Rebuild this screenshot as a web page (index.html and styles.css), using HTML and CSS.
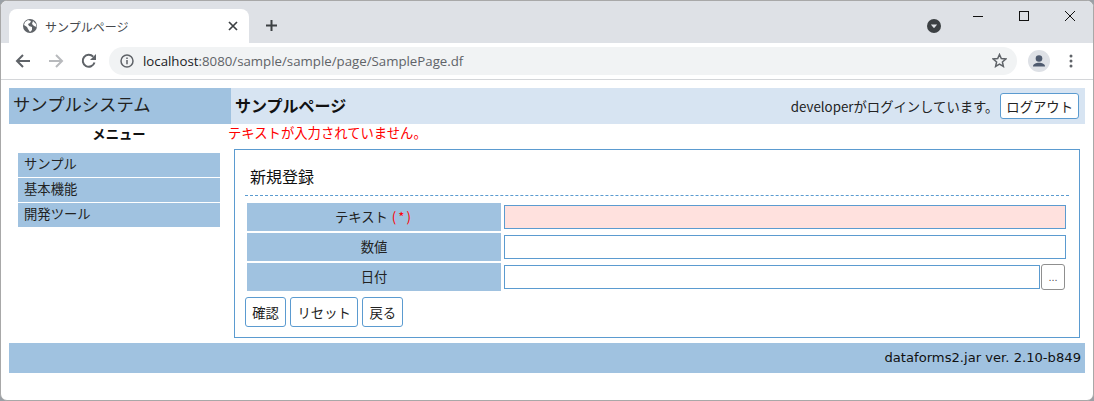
FILE: index.html
```html
<!DOCTYPE html>
<html lang="ja">
<head>
    <meta charset="UTF-8">
    <title>サンプルページ</title>
    <link rel="stylesheet" href="styles.css">
</head>
<body>
<div class="window">
    <div class="tabstrip">
        <div class="tab">
            <svg class="favicon" width="16" height="16" viewBox="0 0 16 16"><circle cx="8" cy="8" r="7" fill="#5f6368"/><path d="M3 4l3-2 3 1-1 2-2 1 1 2 3 1v3l-2 2-2-3-1-2-3-2zM11 3l3 3 .5 3-2.500-1-2-2z" fill="#fff"/></svg>
            <span class="tab-title">サンプルページ</span>
            <svg class="tab-close" width="10" height="10" viewBox="0 0 10 10"><path d="M1 1l8 8M9 1l-8 8" stroke="#3c4043" stroke-width="1.700"/></svg>
        </div>
        <svg class="new-tab" width="13" height="13" viewBox="0 0 13 13"><path d="M6.500 1v11M1 6.500h11" stroke="#3c4043" stroke-width="2"/></svg>
        <div class="strip-right">
            <svg class="tab-search" width="14" height="14" viewBox="0 0 14 14"><circle cx="7" cy="7" r="7" fill="#3c4043"/><path d="M3.800 5.500h6.400L7 9.300z" fill="#dee1e6"/></svg>
            <div class="win-buttons">
                <svg width="46" height="30" viewBox="0 0 46 30"><path d="M18 15.500h10" stroke="#111"/></svg>
                <svg width="46" height="30" viewBox="0 0 46 30"><rect x="18.500" y="10.500" width="9" height="9" fill="none" stroke="#111"/></svg>
                <svg width="46" height="30" viewBox="0 0 46 30"><path d="M18 10l10 10M28 10l-10 10" stroke="#111"/></svg>
            </div>
        </div>
    </div>
    <div class="toolbar">
        <svg class="nav" width="16" height="16" viewBox="0 0 16 16"><path d="M15 8H2M8 2L2 8l6 6" fill="none" stroke="#5f6368" stroke-width="2"/></svg>
        <svg class="nav" width="16" height="16" viewBox="0 0 16 16"><path d="M1 8h13M8 2l6 6-6 6" fill="none" stroke="#b8babd" stroke-width="2"/></svg>
        <svg class="nav" width="16" height="16" viewBox="0 0 16 16"><path d="M13.500 9.500A6 6 0 1 1 12.200 3.700" fill="none" stroke="#5f6368" stroke-width="2"/><path d="M15 1v6H9z" fill="#5f6368"/></svg>
        <div class="omnibox">
            <svg width="14" height="14" viewBox="0 0 14 14"><circle cx="7" cy="7" r="6" fill="none" stroke="#5f6368" stroke-width="1.500"/><path d="M7 6v4.200M7 3.500v1.500" stroke="#5f6368" stroke-width="1.500"/></svg>
            <span class="url"><span class="host">localhost</span>:8080/sample/sample/page/SamplePage.df</span>
            <svg class="star" width="15" height="15" viewBox="0 0 15 15"><path d="M7.500 1.500l1.800 4.100 4.500.4-3.400 3 1 4.400-3.900-2.300-3.900 2.300 1-4.400-3.400-3 4.500-.4z" fill="none" stroke="#5f6368" stroke-width="1.500"/></svg>
        </div>
        <svg class="avatar" width="22" height="22" viewBox="0 0 22 22"><circle cx="11" cy="11" r="11" fill="#dee1e6"/><circle cx="11" cy="8.500" r="3.300" fill="#4e5a6e"/><path d="M5 16.500c0-2.700 3-3.800 6-3.800s6 1.100 6 3.800z" fill="#4e5a6e"/></svg>
        <svg class="dots" width="4" height="14" viewBox="0 0 4 14"><circle cx="2" cy="2" r="1.500" fill="#5f6368"/><circle cx="2" cy="7" r="1.500" fill="#5f6368"/><circle cx="2" cy="12" r="1.500" fill="#5f6368"/></svg>
    </div>

    <div class="page">
        <div class="header">
            <div class="system-name">サンプルシステム</div>
            <div class="page-head">
                <span class="page-name">サンプルページ</span>
                <span class="login-info">developerがログインしています。</span>
                <button class="btn logout">ログアウト</button>
            </div>
        </div>
        <div class="main">
            <div class="side">
                <div class="menu-title">メニュー</div>
                <ul class="menu">
                    <li>サンプル</li>
                    <li>基本機能</li>
                    <li>開発ツール</li>
                </ul>
            </div>
            <div class="content">
                <div class="message">テキストが入力されていません。</div>
                <div class="form-box">
                    <div class="form-title">新規登録</div>
                    <table class="form-table">
                        <tr>
                            <th>テキスト <span class="required">(*)</span></th>
                            <td><input type="text" class="field error"></td>
                        </tr>
                        <tr>
                            <th>数値</th>
                            <td><input type="text" class="field"></td>
                        </tr>
                        <tr>
                            <th>日付</th>
                            <td class="date-cell"><input type="text" class="field"><button class="pick">...</button></td>
                        </tr>
                    </table>
                    <div class="buttons">
                        <button class="btn">確認</button>
                        <button class="btn">リセット</button>
                        <button class="btn">戻る</button>
                    </div>
                </div>
            </div>
        </div>
        <div class="footer">dataforms2.jar ver. 2.10-b849</div>
    </div>
</div>
</body>
</html>
```

FILE: styles.css
```css
* {
    box-sizing: border-box;
}
html, body {
    margin: 0;
    height: 100%;
    background-color: #9aa0a6;
}
body {
    font-family: "Noto Sans CJK JP", "DejaVu Sans", sans-serif;
    font-size: 13.33px;
    color: #222;
    overflow: hidden;
}
.window {
    height: 401px;
    background-color: #fff;
    border: 1px solid #a8a8a8;
    border-radius: 7px;
    overflow: hidden;
}

/* browser chrome */
.tabstrip {
    height: 42px;
    background-color: #dee1e6;
    display: flex;
    align-items: flex-end;
    padding-left: 8px;
}
.tab {
    width: 240px;
    height: 34px;
    background-color: #fff;
    border-radius: 8px 8px 0 0;
    display: flex;
    align-items: center;
    padding: 0 11px 0 13px;
}
.tab-title {
    margin-left: 7px;
    font-size: 12px;
    color: #45484c;
    flex: 1;
}
.new-tab {
    margin: 0 0 11px 16px;
}
.strip-right {
    flex: 1;
    height: 100%;
    display: flex;
    justify-content: flex-end;
    align-items: flex-start;
}
.tab-search {
    margin: 18px 14px 0 0;
}
.win-buttons {
    display: flex;
}
.win-buttons svg {
    display: block;
}
.toolbar {
    height: 37px;
    background-color: #fff;
    border-bottom: 1px solid #d4d6d9;
    display: flex;
    align-items: center;
    padding: 0 20px 1px 14px;
}
.nav {
    margin-right: 17px;
}
.omnibox {
    flex: 1;
    height: 28px;
    margin-left: -5px;
    background-color: #f1f3f4;
    border-radius: 14px;
    display: flex;
    align-items: center;
    padding: 0 10px 0 11px;
}
.url {
    margin-left: 9px;
    flex: 1;
    font-family: "Open Sans", sans-serif;
    font-size: 13.25px;
    color: #5f6368;
}
.host {
    color: #202124;
}
.avatar {
    margin: 0 19px 0 11px;
}

/* page */
.page {
    padding: 8px 8px 0;
}
.header {
    display: flex;
    height: 36px;
}
.system-name {
    width: 222px;
    background-color: #a0c2e0;
    font-size: 17.33px;
    line-height: 32px;
    padding-left: 4px;
}
.page-head {
    flex: 1;
    background-color: #d7e4f2;
    display: flex;
    align-items: center;
    padding: 0 6px 0 4px;
}
.page-name {
    flex: 1;
    font-size: 16px;
    font-weight: bold;
    color: #111;
    padding-bottom: 2px;
}
.login-info {
    margin-right: 2px;
}
.btn {
    height: 30px;
    padding: 0 6.3px;
    background-color: #fff;
    border: 1px solid #5b9bd0;
    border-radius: 3px;
    font-family: inherit;
    font-size: 13.33px;
    color: #222;
}
.logout {
    height: 26px;
    padding: 0 5px;
}
.main {
    display: flex;
    height: 219px;
}
.side {
    width: 220px;
}
.menu-title {
    text-align: center;
    font-weight: bold;
    line-height: 19px;
    height: 20px;
    color: #111;
}
.menu {
    list-style: none;
    margin: 9px 0 0 9px;
    padding: 0;
    width: 202px;
}
.menu li {
    height: 24px;
    line-height: 22px;
    margin-bottom: 1px;
    padding-left: 6px;
    background-color: #a0c2e0;
}
.content {
    flex: 1;
}
.message {
    color: #f00;
    line-height: 18px;
    height: 25px;
    margin-left: -1px;
}
.form-box {
    width: 846px;
    height: 189px;
    margin-left: 5px;
    border: 1px solid #5b9bd0;
    padding: 10px;
}
.form-title {
    font-size: 16px;
    line-height: 32px;
    height: 36px;
    padding-left: 5px;
    border-bottom: 1px dashed #5b9bd0;
    color: #111;
}
.form-table {
    border-collapse: separate;
    border-spacing: 2px;
    margin-top: 5px;
    width: 824px;
    table-layout: fixed;
}
.form-table th {
    width: 254px;
    height: 28px;
    padding: 0 0 1px;
    font-weight: normal;
    background-color: #a0c2e0;
    text-align: center;
}
.form-table td {
    padding: 0 1px;
}
.required {
    color: #f00;
    letter-spacing: 2px;
    margin-left: 1px;
}
.field {
    display: block;
    width: 100%;
    height: 24px;
    border: 1px solid #5b9bd0;
    background-color: #fff;
}
.field.error {
    background-color: #ffe1de;
}
.date-cell {
    display: flex;
    align-items: center;
    height: 28px;
}
.pick {
    flex: none;
    width: 24px;
    height: 26px;
    margin: 0 1px;
    padding: 0;
    background-color: #fff;
    border: 1px solid #8f8f8f;
    border-radius: 3px;
    font-size: 11px;
    color: #555;
}
.buttons {
    display: flex;
    gap: 4px;
    margin-top: 4px;
}
.footer {
    height: 30px;
    background-color: #a0c2e0;
    text-align: right;
    font-family: "DejaVu Sans", sans-serif;
    font-size: 13.13px;
    line-height: 29px;
    padding-right: 4px;
    color: #111;
}
```
